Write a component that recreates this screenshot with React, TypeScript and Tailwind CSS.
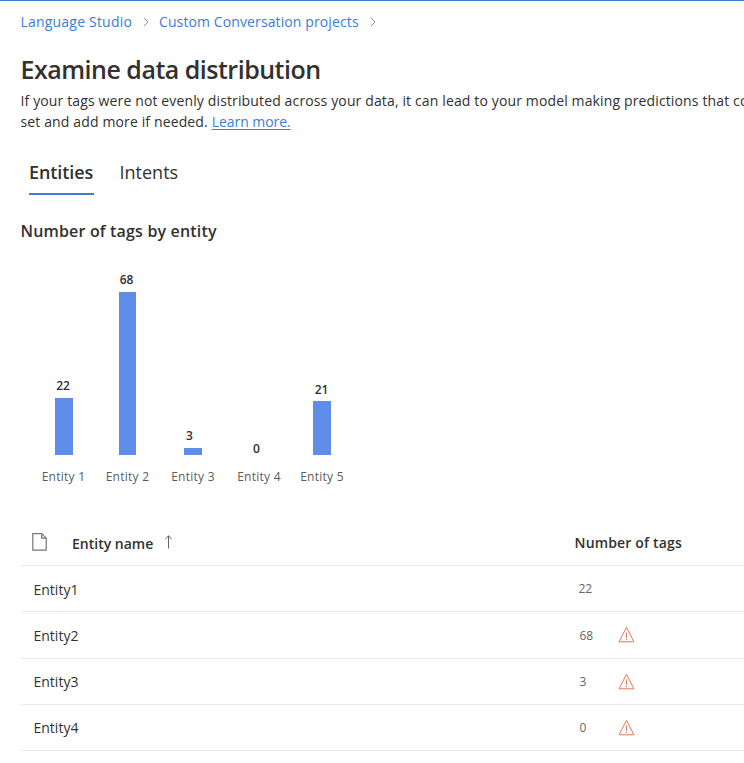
import React from "react";

const bars = [
  { name: "Entity 1", value: 22, height: 57, shift: "mb-[3px] pr-px", bar: "ml-[23.5px]" },
  { name: "Entity 2", value: 68, height: 163.5, shift: "mb-[3px] pr-0.5", bar: "ml-[23px]" },
  { name: "Entity 3", value: 3, height: 7.5, shift: "mb-[3px] pr-[7px]", bar: "ml-[24.5px]" },
  { name: "Entity 4", value: 0, height: 0, shift: "-mb-[3px] pr-[5px]", bar: "ml-[24px]" },
  { name: "Entity 5", value: 21, height: 53.7, shift: "mb-[2.5px] pr-px", bar: "ml-[21.5px]" },
];

const rows = [
  { name: "Entity1", tags: 22, warn: false, pad: "pl-[18px]" },
  { name: "Entity2", tags: 68, warn: true, pad: "pl-[19px]" },
  { name: "Entity3", tags: 3, warn: true, pad: "pl-[19px]" },
  { name: "Entity4", tags: 0, warn: true, pad: "pl-[19px]" },
];

function Chevron() {
  return (
    <svg width="6" height="10" viewBox="0 0 6 10" fill="none" stroke="#888" strokeWidth="0.9">
      <path d="M0.8 0.8 5 5 0.8 9.2" />
    </svg>
  );
}

function PageIcon() {
  return (
    <svg width="15" height="18" viewBox="0 0 15 18" fill="none" stroke="#777" strokeWidth="1.2">
      <path d="M0.8 0.7H9.7L14.2 5.2V17.2H0.8Z" />
      <path d="M9.7 0.7V5.2H14.2" />
    </svg>
  );
}

function ArrowUp() {
  return (
    <svg width="9" height="14" viewBox="0 0 9 14" fill="none" stroke="#555" strokeWidth="0.9">
      <path d="M4.5 13.5V1M1.3 4 4.5 0.9 7.7 4" />
    </svg>
  );
}

function Warning() {
  return (
    <svg width="17" height="17" viewBox="0 0 17 17" fill="none" stroke="#d97b55" strokeWidth="1">
      <path d="M8.5 1.3 15.9 15.8H1.1Z" />
      <path d="M8.5 6.5V11.7M8.5 12.7V14" />
    </svg>
  );
}

export default function App() {
  return (
    <div className="h-[763px] w-[744px] overflow-hidden border-t border-[#3b7bd4] bg-white font-['Open_Sans','Noto_Sans',sans-serif] text-[#323130]">
      <nav className="ml-[20.5px] flex h-[42px] items-center text-[14px] leading-[20px] text-[#3b7dd8]">
        <a className="w-[112px] tracking-[0.2px] whitespace-nowrap">Language Studio</a>
        <span className="ml-[10px]"><Chevron /></span>
        <a className="ml-[10.5px] w-[199px] tracking-[0.11px] whitespace-nowrap">Custom Conversation projects</a>
        <span className="ml-[11.5px]"><Chevron /></span>
      </nav>
      <h1 className="mt-[8px] ml-[20.5px] h-[36px] text-[25px] leading-[36px] font-semibold tracking-[-0.5px] whitespace-nowrap">Examine data distribution</h1>
      <div className="mt-[3px] ml-[20.5px] text-[14px] leading-[21px] tracking-[0.135px] whitespace-nowrap">
        <p>If your tags were not evenly distributed across your data, it can lead to your model making predictions that co</p>
        <p>set and add more if needed. <a className="tracking-[-0.05px] text-[#3b7dd8] underline underline-offset-2">Learn more.</a></p>
      </div>
      <div className="mt-[26px] ml-[29px] flex h-[37px] gap-[25.5px] text-[18px] leading-[28px] whitespace-nowrap">
        <div className="w-[65px] border-b-2 border-[#3b7dd8] font-semibold tracking-[-0.1px]">Entities</div>
        <div>Intents</div>
      </div>
      <h2 className="mt-[24px] ml-[20.5px] h-[24px] text-[16px] leading-[24px] font-semibold tracking-[0.17px] whitespace-nowrap">Number of tags by entity</h2>
      <div className="mt-[17px] ml-[31.5px] grid h-[230px] grid-cols-[64px_64px_67px_65px_61px]">
        {bars.map((b) => (
          <div key={b.name} className="flex flex-col">
            <div className="flex h-[195px] flex-col justify-end">
              <div className={"text-center text-[12px] leading-[18px] font-semibold " + b.shift}>{b.value}</div>
              <div className={"w-[17.5px] bg-[#608ce9] " + b.bar} style={{ height: b.height }} />
            </div>
            <div className="mt-[13px] text-center text-[12px] leading-[18px] font-medium tracking-[0.25px] whitespace-nowrap text-[#5c5c5c]">{b.name}</div>
          </div>
        ))}
      </div>
      <div className="mt-[30px] ml-[20.5px]">
        <div className="flex h-[46px] items-center border-b border-[#eaeaea] pb-[2px] text-[14px] font-semibold whitespace-nowrap">
          <span className="ml-[11px]"><PageIcon /></span>
          <span className="mt-[4px] ml-[25.5px] w-[82px]">Entity name</span>
          <span className="ml-[10px]"><ArrowUp /></span>
          <span className="mt-px ml-[401.5px] tracking-[0.17px]">Number of tags</span>
        </div>
        {rows.map((r) => (
          <div key={r.name} className="flex h-[46.25px] items-center border-b border-[#eaeaea] text-[14px]">
            <span className="mt-[1px] w-[540px] pl-[13px]">{r.name}</span>
            <span className={"mt-[1.5px] w-[57px] text-[12px] text-[#666] " + r.pad}>{r.tags}</span>
            {r.warn && <Warning />}
          </div>
        ))}
      </div>
    </div>
  );
}
